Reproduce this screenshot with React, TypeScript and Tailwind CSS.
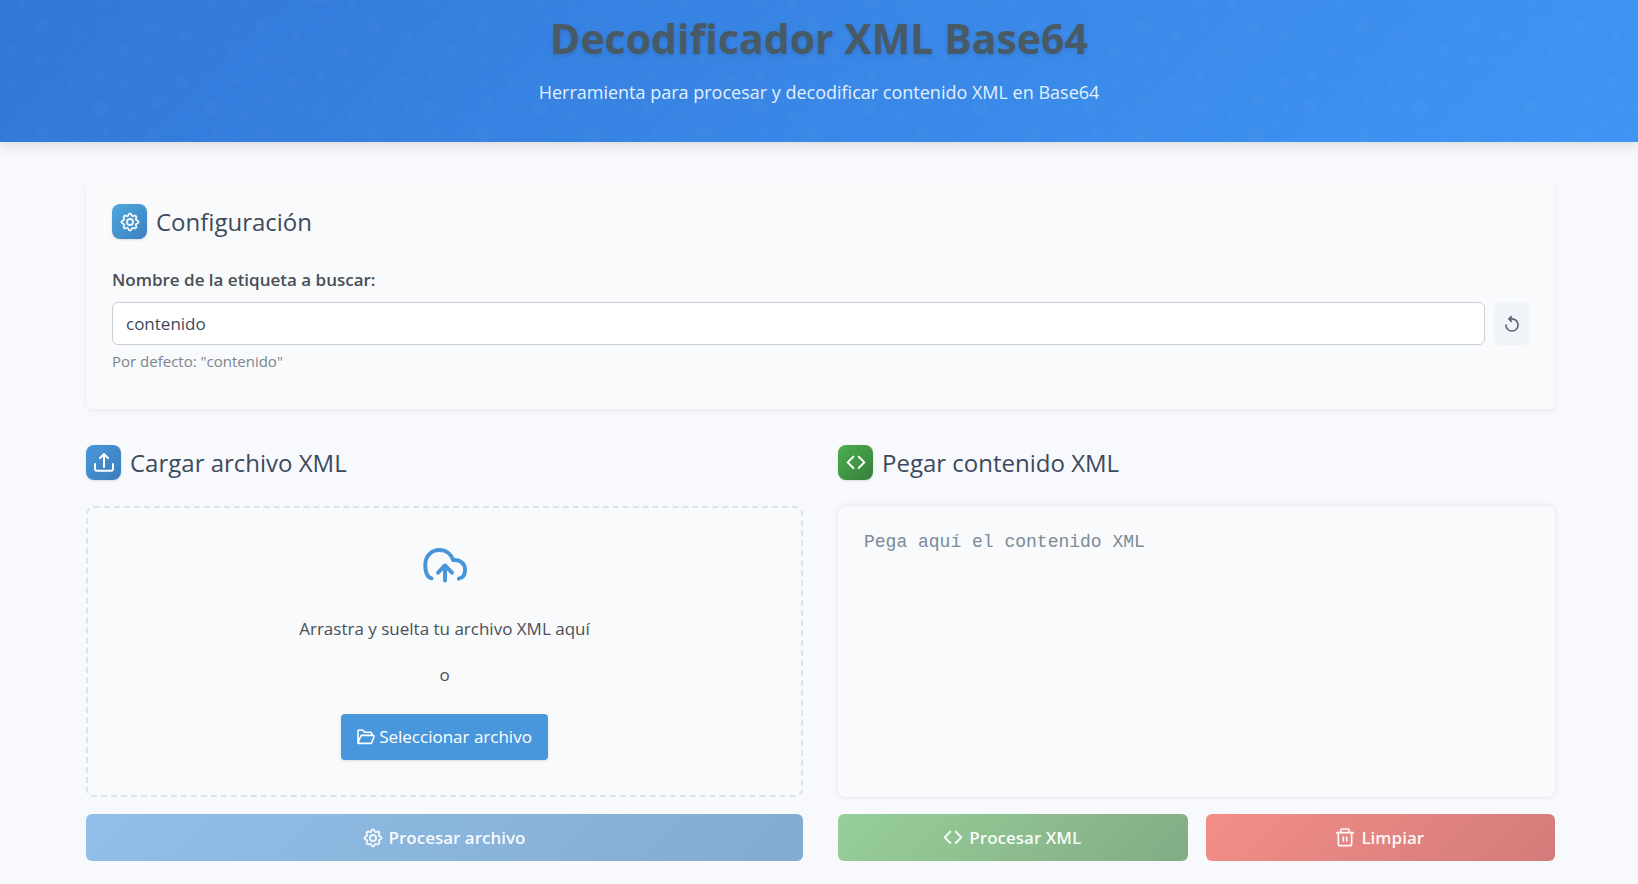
import type { ReactNode } from "react";
import { BsGear } from "react-icons/bs";

const BUBBLES: [number, number, number][] = [
  [11, 11, 7], [59, 36, 7], [16, 33, 3], [79, 64, 3], [34, 87, 3], [90, 11, 3],
  [12, 82, 4], [40, 17, 4], [63, 5, 5], [57, 66, 4], [86, 87, 5], [32, 58, 5],
  [89, 45, 5], [80, 27, 2], [60, 89, 2], [35, 39, 2], [12, 58, 2],
];

function Gear() {
  return <BsGear className="size-[18px] shrink-0 overflow-visible stroke-current stroke-[0.6px]" aria-hidden />;
}

function Line({ children, box = "0 0 54 54", className = "size-[18px]", width = 6 }: {
  children: ReactNode; box?: string; className?: string; width?: number;
}) {
  return (
    <svg viewBox={box} className={"shrink-0 overflow-visible " + className} fill="none" stroke="currentColor" strokeWidth={width} strokeLinecap="round" strokeLinejoin="round" aria-hidden>
      {children}
    </svg>
  );
}

const Code = () => (
  <Line><path d="M19 8 2 25l17 17M35 8l17 17-17 17" /></Line>
);
const Upload = () => (
  <Line className="size-5" box="0 0 60 60"><path d="M30 42V4M18 15 30 3l12 12M3 33v14q0 6 6 6h42q6 0 6-6V33" /></Line>
);
const Trash = () => (
  <Line width={5}><path d="M2 11h50M14 11V5q0-5 5-5h16q5 0 5 5v6M7 12v32q0 6 6 6h28q6 0 6-6V12M22 24v12M32 24v12" /></Line>
);
const Folder = () => (
  <Line width={5} className="h-4 w-[18px]" box="0 0 56 50"><path d="M3 42V6q0-3 3-3h11l7 7h18q4 0 4 4v5M3 43 12 22q1-2 3-2h35q4 0 3 4l-7 18q-1 3-4 3H5q-3 0-2-2Z" /></Line>
);
const Undo = () => (
  <Line width={5} className="size-4" box="0 0 48 50"><path d="M5 28a19 19 0 1 0 19-19H15M22 2l-8 7 8 8" /></Line>
);
const Cloud = () => (
  <Line width={12} className="h-[37px] w-12" box="0 0 146 112">
    <path d="M32 98C18 95 13 78 13 57 13 30 32 12 56 12c20 0 36 12 42 31 22-3 36 12 36 29 0 16-7 25-19 27" />
    <path d="M52 81l21-22 21 22M73 61v44" />
  </Line>
);

function Heading({ icon, tone, children }: { icon: ReactNode; tone: string; children: ReactNode }) {
  return (
    <div className="flex items-center gap-[9px]">
      <span className={"flex size-[35px] items-center justify-center rounded-lg text-white shadow-sm " + tone}>{icon}</span>
      <h2 className="text-[24px] leading-8 text-[#3d4a5c]">{children}</h2>
    </div>
  );
}

function Action({ icon, tone, children }: { icon: ReactNode; tone: string; children: ReactNode }) {
  return (
    <button type="button" className={"flex h-[47px] flex-1 items-center justify-center gap-[7px] rounded-md text-[17px] font-semibold text-white/95 " + tone}>
      {icon}
      {children}
    </button>
  );
}

export default function App() {
  return (
    <div className="min-h-screen bg-[#f8f9fd] font-['Open_Sans','Noto_Sans',sans-serif] text-[17px] text-[#4a4f55]">
      <header className="relative h-[142px] bg-linear-[135deg] from-[#3277d8] to-[#3f95f3] text-center shadow-[0_4px_12px_rgba(0,0,0,0.12)]">
        <svg className="absolute inset-0 size-full" aria-hidden>
          <defs>
            <pattern id="bubbles" width="100" height="100" patternUnits="userSpaceOnUse" patternTransform="translate(-22 -14) scale(1.1)">
              {BUBBLES.map(([x, y, r]) => <circle key={x + "-" + y} cx={x} cy={y} r={r} fill="#ffffff" fillOpacity="0.015" />)}
            </pattern>
          </defs>
          <rect width="100%" height="100%" fill="url(#bubbles)" />
        </svg>
        <div className="relative pt-2">
          <h1 className="text-[41px] leading-[60px] font-bold text-[#485a66] [text-shadow:0_2px_4px_rgba(0,0,0,0.12)]">Decodificador XML Base64</h1>
          <p className="mt-2 text-[18px] leading-8 text-[#e2f0ff]">Herramienta para procesar y decodificar contenido XML en Base64</p>
        </div>
      </header>

      <main className="pt-9 pr-[83px] pb-6 pl-[86px]">
        <section className="rounded-md bg-[#f8fafb] px-[26px] pt-[26px] pb-[38px] shadow-[0_2px_5px_rgba(0,0,0,0.06)]">
          <Heading icon={<Gear />} tone="bg-linear-[135deg] from-[#4fa8dc] to-[#3c7fc0]">Configuración</Heading>
          <label htmlFor="tag" className="mt-[29px] block leading-6 font-semibold">Nombre de la etiqueta a buscar:</label>
          <div className="mt-[10px] flex gap-[9px]">
            <input id="tag" defaultValue="contenido" className="h-[43px] min-w-0 flex-1 rounded-md border border-[#c8cdd6] bg-white px-[13px] text-[#3d4a5c] outline-none" />
            <button type="button" aria-label="Restablecer" className="flex h-[43px] w-[35px] items-center justify-center rounded bg-[#f0f4f9] text-[#5b6470]"><Undo /></button>
          </div>
          <p className="mt-[6px] text-[15px] leading-5 text-[#7c848d]">Por defecto: "contenido"</p>
        </section>

        <div className="mt-9 grid grid-cols-2 gap-[35px]">
          <section>
            <Heading icon={<Upload />} tone="bg-linear-[135deg] from-[#4798db] to-[#3d7dbb]">Cargar archivo XML</Heading>
            <div className="mt-[26px] flex h-[291px] flex-col items-center rounded-lg border-2 border-dashed border-[#dce3ec] bg-[#f8fafb] pt-[38px]">
              <span className="text-[#4896d8]"><Cloud /></span>
              <p className="mt-[34px] leading-6">Arrastra y suelta tu archivo XML aquí</p>
              <p className="mt-[22px] leading-6">o</p>
              <button type="button" className="mt-[27px] flex h-[46px] items-center gap-1 rounded bg-[#4897dc] px-4 text-white shadow-sm"><Folder />Seleccionar archivo</button>
            </div>
            <div className="mt-[17px] flex">
              <Action icon={<Gear />} tone="bg-linear-[135deg] from-[#90bfe9] to-[#84abd0]">Procesar archivo</Action>
            </div>
          </section>

          <section>
            <Heading icon={<Code />} tone="bg-linear-[135deg] from-[#4caf50] to-[#367e3a]">Pegar contenido XML</Heading>
            <textarea aria-label="Contenido XML" placeholder="Pega aquí el contenido XML" className="mt-[26px] block h-[291px] w-full resize-none rounded-lg bg-[#f8fafb] bg-[repeating-linear-gradient(transparent_0_34px,#f5f7f9_34px_35px)] p-[26px] font-['Liberation_Mono',monospace] text-[18px] leading-5 shadow-[0_0_6px_rgba(0,0,0,0.09)] outline-none placeholder:text-[#7b8b98]" />
            <div className="mt-[17px] flex gap-[18px]">
              <Action icon={<Code />} tone="bg-linear-[135deg] from-[#97cf99] to-[#83ac85]">Procesar XML</Action>
              <Action icon={<Trash />} tone="bg-linear-[135deg] from-[#f38e87] to-[#d37b7b]">Limpiar</Action>
            </div>
          </section>
        </div>
      </main>
    </div>
  );
}
